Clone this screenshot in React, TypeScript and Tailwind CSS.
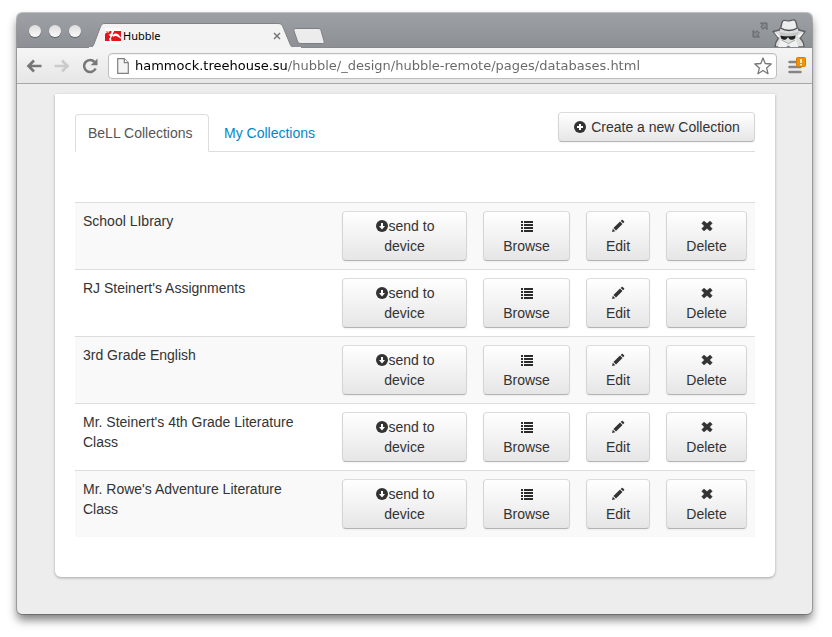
import React from "react";

const collections = [
  "School LIbrary",
  "RJ Steinert's Assignments",
  "3rd Grade English",
  "Mr. Steinert's 4th Grade Literature Class",
  "Mr. Rowe's Adventure Literature Class",
];

const buttonClass =
  "cursor-pointer rounded border border-[#ccc] border-x-[#d5d5d5] border-t-[#dcdcdc] border-b-[#b3b3b3] bg-linear-to-b from-white to-[#e6e6e6] px-1 py-1 text-center text-sm leading-5 text-[#333] shadow-[inset_0_1px_0_rgba(255,255,255,0.2),0_1px_2px_rgba(0,0,0,0.05)]";

function PlusIcon() {
  return (
    <svg viewBox="0 0 14 14" className="h-3.5 w-3.5 shrink-0" aria-hidden="true">
      <circle cx="7" cy="7" r="6" fill="#333" />
      <path d="M6 4h2v2h2v2H8v2H6V8H4V6h2z" fill="#fff" />
    </svg>
  );
}

function DownIcon() {
  return (
    <svg viewBox="0 0 14 14" className="inline-block h-3.5 w-3.5 align-[-2px]" aria-hidden="true">
      <circle cx="7" cy="7" r="6" fill="#333" />
      <path d="M6 4h2v3h2L7 10.5 4 7h2z" fill="#fff" />
    </svg>
  );
}

function ListIcon() {
  return (
    <svg viewBox="0 0 14 14" className="h-3.5 w-3.5" aria-hidden="true">
      <path
        d="M1 2h2v2H1zM4 2h9v2H4zM1 5h2v2H1zM4 5h9v2H4zM1 8h2v2H1zM4 8h9v2H4zM1 11h2v2H1zM4 11h9v2H4z"
        fill="#2b2b2b"
      />
    </svg>
  );
}

function PencilIcon() {
  return (
    <svg viewBox="0 0 14 14" className="h-3.5 w-3.5" aria-hidden="true">
      <path
        d="M1 13l.8-3.300 2.500 2.500zM2.400 9l6.600-6.500 2.500 2.500L5 11.600zM9.700 1.900l1-1c.3-.3.700-.3 1 0l1.400 1.400c.3.3.3.700 0 1l-1 1z"
        fill="#333"
      />
    </svg>
  );
}

function RemoveIcon() {
  return (
    <svg viewBox="0 0 14 14" className="h-3.5 w-3.5" aria-hidden="true">
      <path
        d="M4 2l3 2.600L10 2l2.300 2.200L9.700 7l2.600 2.800L10 12 7 9.400 4 12 1.700 9.800 4.300 7 1.700 4.200z"
        fill="#333"
        stroke="#333"
        strokeWidth=".4"
        strokeLinejoin="round"
      />
    </svg>
  );
}

function Incognito() {
  return (
    <svg viewBox="0 0 34 28" className="h-7 w-[34px]" aria-hidden="true">
      <path
        d="M1 12.500l6.500-1.500c-.3-1 .2-1.800 1.300-2.500L10 3.500C10.500 1.500 12 1 14 1.600c2 .5 3.500.4 5-.3 2.500-1 4.500-.3 5 1.700l1.200 5.500c1.200.7 1.800 1.600 1.500 2.500l6.300 1.500-5 6.500c2.500 2.500 4 5.500 4 9H3c.2-3.500 1.500-6.500 3.500-9z"
        fill="#dedede"
        stroke="#5d5f63"
        strokeWidth="1.400"
        strokeLinejoin="round"
      />
      <path d="M11 3.500c.5-1.300 1.500-1.400 3-1 2 .6 4 .5 5.500-.2 1.700-.6 3-.4 3.500 1.200l1 5c-4 2.300-10 2.300-14 0z" fill="#ededed" />
      <path d="M9 9.300c4.500 2.900 11.500 2.900 16 0" fill="none" stroke="#4b4d50" strokeWidth="1.300" />
      <path d="M7 12.300c6 2.700 14 2.700 20 0l-1 4c-6 1.200-12 1.200-17.500 0z" fill="#c6c7c8" />
      <path
        d="M8.500 16.500c3 .7 5 .8 7 .8 2.500 0 5-.1 8-.8.2 3-1.300 4.300-3.500 4.300-1.800 0-3-.8-3.700-2.300h-.8c-.7 1.500-1.700 2.300-3.500 2.300-2.200 0-3.500-1.500-3.500-4.300z"
        fill="#1f1f1f"
      />
      <path d="M9 20l-3 8h8.500l2-4.500zM23.500 20l3 8H18l-1.500-4.500z" fill="#f1f1f1" />
      <path d="M9.500 21l7 3.500 6.500-3.500" fill="none" stroke="#8e9093" strokeWidth=".8" />
      <path d="M1.800 12.900l6 4.100-1.300 1.800zM32.200 12.900l-7 4.100 2.500 1.800z" fill="#f8f8f8" />
    </svg>
  );
}

function TitleBar() {
  return (
    <header className="flex h-[35px] items-end border-b border-[#85888c] bg-linear-to-b from-[#9da1a6] to-[#8c8f94] pr-1.5">
      <div className="mb-2.5 flex gap-2 pl-3">
        {["Close", "Minimize", "Zoom"].map((name) => (
          <button
            key={name}
            aria-label={name}
            className="h-3 w-3 rounded-full bg-linear-to-b from-[#dcdcdc] to-[#fafafa] shadow-[0_1px_1px_rgba(0,0,0,0.35)]"
          />
        ))}
      </div>
      <div className="relative -mb-px ml-2 flex h-[25px] w-[212px] items-center pr-3 pl-4">
        <svg viewBox="0 0 212 25" className="absolute inset-0 h-[25px] w-[212px]" aria-hidden="true">
          <path
            d="M0 24.500c3 0 4-1 5-3.500L11 5C12.500 1.500 13 .5 16 .5H189c3 0 4 1 5 3.500l7 17c1 2.500 2 3.500 5 3.500V25H0z"
            fill="#f3f3f3"
            stroke="#7f8286"
            strokeWidth="1"
          />
          <path d="M0 24.500H212" stroke="#f3f3f3" strokeWidth="1" />
        </svg>
        <svg viewBox="0 0 16 16" className="relative h-4 w-4" aria-hidden="true">
          <rect width="16" height="16" fill="#fff" />
          <path d="M0 3h16v10H0z" fill="#e8141c" />
          <path
            d="M0 3h6.500v1.500L5 6.500 3.500 6 5.500 9 4 11l1 2h1.500l-.5-3L8 7.500C7.500 6 8 4.500 9 4V3H5l-2 2L1.500 4.500 0 6zM8 7c2-2.500 5.500-1.500 7 1.500l1 1v1l-3-1.500C12 8 10 7.500 8 9z"
            fill="#fff"
          />
          <path d="M1.500 3.500l1.500 1M4 3.500l1 1.500" stroke="#e8141c" strokeWidth="1" />
        </svg>
        <span className="relative ml-0.5 flex-1 font-['Noto_Sans','Open_Sans',sans-serif] text-[11px] leading-4 text-black">
          Hubble
        </span>
        <button aria-label="Close tab" className="relative mr-1 flex h-4 w-4 items-center justify-center">
          <svg viewBox="0 0 8 8" className="h-2 w-2" aria-hidden="true">
            <path d="M1 1l6 6M7 1L1 7" stroke="#777" strokeWidth="1.500" />
          </svg>
        </button>
      </div>
      <button aria-label="New tab" className="mb-[3px] -ml-2">
        <svg viewBox="0 0 32 16" className="h-4 w-8" aria-hidden="true">
          <path
            d="M3 .5h22c1.500 0 2.400.6 3 2l3 10.500c.5 1.500 0 2.500-1.500 2.500H8c-2 0-2.800-.8-3.500-2.500L1 3C.5 1.500 1 .5 3 .5z"
            fill="#ececec"
            stroke="#7c7f83"
          />
        </svg>
      </button>
      <button aria-label="Full screen" className="mr-1 mb-[9px] ml-auto">
        <svg viewBox="0 0 16 16" className="h-4 w-4" aria-hidden="true">
          <path
            d="M8.500 1H15v6.500l-2.100-2.100-1.900 1.900-2.300-2.300 1.900-1.900zM7.500 15H1V8.500l2.100 2.100L5 8.700 7.300 11l-1.900 1.900z"
            fill="#85888c"
            stroke="#5f6266"
            strokeWidth=".9"
          />
        </svg>
      </button>
      <Incognito />
    </header>
  );
}

function Toolbar() {
  return (
    <div className="flex h-9 items-center border-b border-[#a8a8a8] bg-linear-to-b from-[#f5f5f5] to-[#e6e6e6] pr-1.5 pl-[9px]">
      <button aria-label="Back" className="mr-3">
        <svg viewBox="0 0 16 16" className="h-4 w-4" aria-hidden="true">
          <path d="M8 2.500L2.500 8 8 13.500M2.500 8H15.500" fill="none" stroke="#777" strokeWidth="2.700" />
        </svg>
      </button>
      <button aria-label="Forward" className="mr-3">
        <svg viewBox="0 0 16 16" className="h-4 w-4" aria-hidden="true">
          <path d="M8 2.500L13.500 8 8 13.500M13.500 8H.5" fill="none" stroke="#cbcbcb" strokeWidth="2.700" />
        </svg>
      </button>
      <button aria-label="Reload" className="mr-2.5">
        <svg viewBox="0 0 16 16" className="h-4 w-4" aria-hidden="true">
          <path d="M13.600 10.500a6 6 0 1 1-1-6.500" fill="none" stroke="#777" strokeWidth="2.500" />
          <path d="M15.500.5v6.800H8.700z" fill="#777" />
        </svg>
      </button>
      <div className="flex h-[26px] min-w-0 flex-1 items-center rounded-sm border border-[#bdbdbd] bg-white pr-1 pl-2 shadow-[inset_0_1px_1px_rgba(0,0,0,0.06)]">
        <svg viewBox="0 0 12 16" className="mr-1.5 h-4 w-3 shrink-0" aria-hidden="true">
          <path d="M.7.700h6.600l4 4v10.600H.700z" fill="#f4f4f4" stroke="#808080" strokeWidth="1.200" />
          <path d="M7.300.700v4h4" fill="#fff" stroke="#808080" strokeWidth="1.200" />
        </svg>
        <input
          type="text"
          aria-label="Address"
          defaultValue="hammock.treehouse.su/hubble/_design/hubble-remote/pages/databases.html"
          className="h-6 min-w-0 flex-1 bg-[linear-gradient(to_right,#000_153px,#666_153px)] bg-clip-text font-['DejaVu_Sans',sans-serif] text-[13px] leading-6 text-[#666] outline-none [-webkit-text-fill-color:transparent]"
        />
        <button aria-label="Bookmark this page">
          <svg viewBox="0 0 18 18" className="h-[18px] w-[18px]" aria-hidden="true">
            <path
              d="M9 1l2.200 5.500 6 .5-4.600 3.900L14 16.700 9 13.500l-5 3.200 1.400-5.800L.8 7l6-.5z"
              fill="#fff"
              stroke="#777"
              strokeWidth="1.300"
              strokeLinejoin="round"
            />
          </svg>
        </button>
      </div>
      <button aria-label="Menu" className="ml-[11px]">
        <svg viewBox="0 0 18 18" className="h-[18px] w-[18px]" aria-hidden="true">
          <path d="M1.500 5h11M1.500 10h11M1.500 15h11" stroke="#858585" strokeWidth="2.500" strokeLinecap="round" />
          <rect x="8.500" y=".5" width="9" height="9" rx="1" fill="#f39200" stroke="#dd7a00" />
          <path d="M12.200 2h1.600v4h-1.600zM12.200 7h1.600v1.500h-1.600z" fill="#fff" />
        </svg>
      </button>
    </div>
  );
}

function CollectionRow({ name }: { name: string }) {
  return (
    <tr className="border-t border-[#ddd] align-top odd:bg-[#f9f9f9]">
      <td className="py-2 pr-8 pl-2 leading-5">{name}</td>
      <td className="p-2">
        <button className={`${buttonClass} block w-full`}>
          <DownIcon />
          send to
          <br />
          device
        </button>
      </td>
      <td className="p-2">
        <button className={`${buttonClass} block w-full`}>
          <span className="flex h-5 items-center justify-center">
            <ListIcon />
          </span>
          Browse
        </button>
      </td>
      <td className="p-2">
        <button className={`${buttonClass} block w-full`}>
          <span className="flex h-5 items-center justify-center">
            <PencilIcon />
          </span>
          Edit
        </button>
      </td>
      <td className="p-2">
        <button className={`${buttonClass} block w-full`}>
          <span className="flex h-5 items-center justify-center">
            <RemoveIcon />
          </span>
          Delete
        </button>
      </td>
    </tr>
  );
}

export default function App() {
  return (
    <div className="bg-white pt-[13px] pr-5 pb-[22px] pl-[17px] font-['Liberation_Sans',Arial,sans-serif] text-sm text-[#333]">
      <div className="overflow-hidden rounded-[5px] bg-[#ededed] shadow-[0_0_0_1px_rgba(0,0,0,0.22),0_6px_10px_rgba(0,0,0,0.5)]">
        <TitleBar />
        <Toolbar />
        <main className="pt-2.5 pr-[37px] pb-[37px] pl-[38px]">
          <section className="rounded-b-md bg-white px-5 pt-[18px] pb-10 shadow-[0_1px_3px_rgba(0,0,0,0.3)]">
            <div className="flex items-start justify-between border-b border-[#ddd]">
              <nav className="mt-0.5 -mb-px flex gap-0.5 leading-5">
                <a
                  href="#bell"
                  className="w-[134px] rounded-t border border-[#ddd] border-b-white bg-white px-3 py-2 text-[#555]"
                >
                  BeLL Collections
                </a>
                <a href="#mine" className="border border-transparent px-3 py-2 text-[#08c]">
                  My Collections
                </a>
              </nav>
              <button className={`${buttonClass} flex w-[197px] items-center justify-center gap-1`}>
                <PlusIcon />
                Create a new Collection
              </button>
            </div>
            <table className="mt-[50px] w-full table-fixed border-collapse">
              <colgroup>
                <col />
                <col className="w-[141px]" />
                <col className="w-[103px]" />
                <col className="w-20" />
                <col className="w-[97px]" />
              </colgroup>
              <tbody>
                {collections.map((name) => (
                  <CollectionRow key={name} name={name} />
                ))}
              </tbody>
            </table>
          </section>
        </main>
      </div>
    </div>
  );
}
